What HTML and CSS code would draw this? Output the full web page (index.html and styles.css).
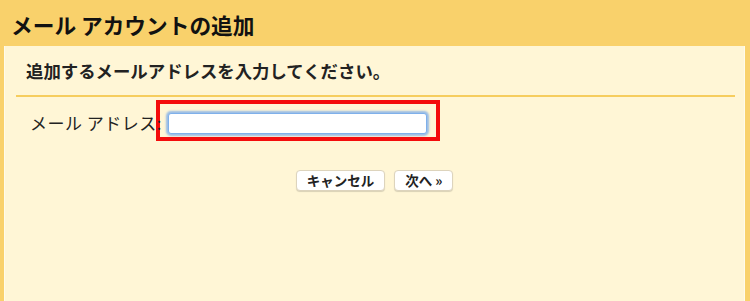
FILE: index.html
```html
<!DOCTYPE html>
<html lang="ja">
<head>
    <meta charset="UTF-8">
    <meta name="viewport" content="width=device-width, initial-scale=1.0">
    <title>メール アカウントの追加</title>
    <link rel="stylesheet" href="styles.css">
</head>
<body>
    <div class="dialog">
        <h1 class="dialog-title">メール アカウントの追加</h1>
        <div class="panel">
            <p class="intro">追加するメールアドレスを入力してください。</p>
            <div class="divider"></div>
            <div class="field-row">
                <label class="field-label" for="email">メール アドレス:</label>
                <span class="field-wrap">
                    <input type="text" class="field-input" id="email">
                    <span class="highlight"></span>
                </span>
            </div>
            <div class="actions">
                <button class="btn">キャンセル</button>
                <button class="btn">次へ &raquo;</button>
            </div>
        </div>
    </div>
</body>
</html>
```

FILE: styles.css
```css
html, body {
    height: 100%;
}
body {
    margin: 0;
    font-family: "Noto Sans CJK JP", "Noto Sans", sans-serif;
    background-color: #f9d16b;
    color: #222;
}
.dialog {
    display: flex;
    flex-direction: column;
    height: 100%;
}
.dialog-title {
    margin: 0;
    height: 46px;
    padding: 0 0 0 11px;
    font-size: 21.7px;
    font-weight: bold;
    line-height: 50px;
    color: #111;
    box-sizing: border-box;
}
.panel {
    flex: 1;
    margin: 0 5px 0 4px;
    background-color: #fff6d6;
    border-left: 1px solid #fffbea;
    border-right: 1px solid #fffbea;
    padding-top: 13px;
}
.intro {
    margin: 0 0 12px 21px;
    font-size: 17.4px;
    font-weight: bold;
    line-height: 24px;
}
.divider {
    height: 2px;
    margin: 0 9px 0 11px;
    background-color: #f6cd5e;
}
.field-row {
    display: flex;
    align-items: center;
    margin-top: 14px;
    padding-left: 25px;
    height: 24px;
}
.field-label {
    position: relative;
    z-index: 1;
    font-size: 17px;
    line-height: 24px;
    letter-spacing: 0.5px;
}
.field-wrap {
    position: relative;
    margin-left: 6px;
}
.field-input {
    display: block;
    width: 259px;
    height: 21px;
    box-sizing: border-box;
    border: 1px solid #7fb0ea;
    border-radius: 3px;
    background: #fff;
    box-shadow: 0 0 2px 2px rgba(120, 170, 235, 0.75);
    outline: none;
}
.highlight {
    position: absolute;
    left: -12px;
    top: -13px;
    width: 276px;
    height: 33px;
    border: 4px solid #f40c0c;
    pointer-events: none;
}
.actions {
    display: flex;
    justify-content: center;
    gap: 9px;
    margin-top: 35px;
}
.btn {
    height: 21px;
    padding: 0 10px;
    font-family: "Noto Sans CJK JP", "Noto Sans", sans-serif;
    font-size: 13.5px;
    font-weight: bold;
    color: #222;
    background-color: #fff;
    border: 1px solid #ddd4bd;
    border-radius: 4px;
    box-shadow: 0 1px 1px rgba(0, 0, 0, 0.15);
    line-height: 19px;
}
```
